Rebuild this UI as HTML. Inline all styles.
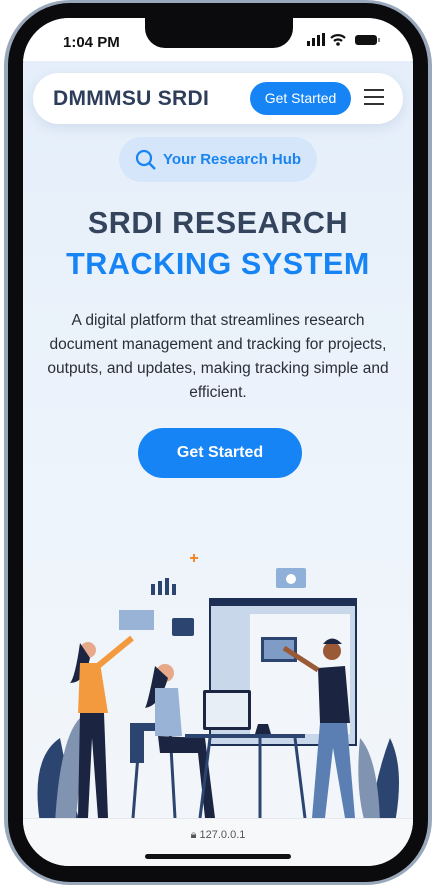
<!DOCTYPE html>
<html><head><meta charset="utf-8"><style>
*{margin:0;padding:0;box-sizing:border-box}
body{width:436px;height:885px;background:#fff;position:relative;overflow:hidden;font-family:"Liberation Sans",sans-serif}
.frame{position:absolute;left:4px;top:0;width:428px;height:885px;border-radius:66px;background:#9aa8bb;}
.bez{position:absolute;left:8px;top:3px;width:420px;height:879px;border-radius:62px;background:#0b0b0d}
.screen{position:absolute;left:23px;top:18px;width:390px;height:848px;border-radius:46px;overflow:hidden;background:linear-gradient(#e4eefa,#eef4fb 60%,#f3f6fa)}
.status{position:absolute;left:0;top:0;width:390px;height:43px;background:#fff}
.notch{position:absolute;left:122px;top:0;width:148px;height:30px;background:#0b0b0d;border-radius:0 0 20px 20px}
.time{position:absolute;left:40px;top:16px;font-weight:bold;font-size:15px;color:#111}
.nav{position:absolute;left:10px;top:55px;width:370px;height:51px;background:#fff;border-radius:26px;box-shadow:0 4px 12px rgba(60,90,140,.12)}
.logo{position:absolute;left:20px;top:14px;font-size:21px;font-weight:bold;color:#2e3e5a;letter-spacing:.3px}
.gs{position:absolute;left:217px;top:9px;width:101px;height:33px;border-radius:17px;background:#1784f5;color:#fff;font-size:14px;text-align:center;line-height:33px}
.hub{position:absolute;left:96px;top:119px;width:198px;height:45px;border-radius:23px;background:#d5e6fa;color:#1a84f0;font-size:15px;font-weight:bold;line-height:45px;padding-left:44px}
h1{position:absolute;left:0;width:390px;text-align:center;font-size:30.5px;font-weight:bold;letter-spacing:.6px}
p{position:absolute;left:20px;top:291px;width:350px;text-align:center;font-size:15.5px;line-height:24px;color:#2a2f38}
.btn{position:absolute;left:115px;top:410px;width:164px;height:50px;border-radius:25px;background:#1784f5;color:#fff;font-size:16px;font-weight:bold;text-align:center;line-height:50px}
.bottom{position:absolute;left:0;top:800px;width:390px;height:48px;background:#f7f8fa;border-top:1px solid #e6e8ec}
.url{position:absolute;left:0;width:390px;top:10px;text-align:center;font-size:11px;color:#555}
.home{position:absolute;left:122px;top:35px;width:146px;height:5px;border-radius:3px;background:#111}
</style></head><body>
<div class="frame"></div><div class="bez"></div>
<div class="screen">
 <div class="status"><div class="notch"></div><div class="time">1:04 PM</div>
  <svg style="position:absolute;left:284px;top:15px" width="80" height="14"><rect x="0" y="8" width="3" height="5" fill="#111"/><rect x="5" y="5" width="3" height="8" fill="#111"/><rect x="10" y="2" width="3" height="11" fill="#111"/><rect x="15" y="0" width="3" height="13" fill="#111"/>
  <path d="M24 5 A10 10 0 0 1 38 5 M27 8 A6 6 0 0 1 35 8" stroke="#111" stroke-width="2.2" fill="none"/><circle cx="31" cy="11" r="1.8" fill="#111"/>
  <rect x="48" y="2" width="22" height="10" rx="3" fill="#111"/><rect x="71" y="5" width="2" height="4" fill="#888"/></svg></div>
 <div class="nav"><div class="logo">DMMMSU SRDI</div><div class="gs">Get Started</div>
  <svg style="position:absolute;left:331px;top:15px" width="20" height="18"><path d="M0 2H20M0 9H20M0 16H20" stroke="#333" stroke-width="2"/></svg></div>
 <div class="hub"><svg style="position:absolute;left:16px;top:12px" width="22" height="22"><circle cx="9" cy="9" r="7" stroke="#1a84f0" stroke-width="2.2" fill="none"/><path d="M14 14L20 20" stroke="#1a84f0" stroke-width="2.5"/></svg>Your Research Hub</div>
 <h1 style="top:188px;color:#34445c">SRDI RESEARCH</h1>
 <h1 style="top:229px;color:#1784f5">TRACKING SYSTEM</h1>
 <p>A digital platform that streamlines research document management and tracking for projects, outputs, and updates, making tracking simple and efficient.</p>
 <div class="btn">Get Started</div>
 <svg style="position:absolute;left:0;top:520px" width="390" height="280" viewBox="23 520 390 280">
  <rect x="209" y="580" width="148" height="148" fill="#1e2f55"/><rect x="211" y="588" width="144" height="138" fill="#c9d7ea"/><rect x="250" y="596" width="100" height="120" fill="#f2f5fa"/>
  <rect x="261" y="619" width="36" height="25" fill="#2c4470"/><rect x="264" y="622" width="30" height="19" fill="#7e9cc6"/>
  <path d="M153 577V566M160 577V563M167 577V560M174 577V566" stroke="#2c4470" stroke-width="4"/>
  <rect x="119" y="592" width="35" height="20" fill="#98b3d6"/><rect x="172" y="600" width="22" height="18" rx="2" fill="#2c4470"/>
  <rect x="276" y="550" width="30" height="20" rx="2" fill="#8fb0d8"/><circle cx="291" cy="561" r="5" fill="#fff"/>
  <path d="M190 540 h8 M194 536 v8" stroke="#f28a2a" stroke-width="2"/>
  <line x1="70" y1="805" x2="400" y2="805" stroke="#cdd6e3"/>
  <path d="M40 805 Q30 740 60 720 Q70 770 80 805Z" fill="#2c4470"/><path d="M55 805 Q60 720 80 700 Q82 760 75 805Z" fill="#8093b0"/>
  <path d="M395 805 Q405 750 390 720 Q375 760 370 805Z" fill="#2c4470"/><path d="M380 805 Q378 740 360 720 Q355 770 365 805Z" fill="#8093b0"/>
  <circle cx="88" cy="632" r="8" fill="#e7a98a"/><path d="M80 625 Q75 660 70 665 Q85 665 90 640Z" fill="#1b2440"/>
  <path d="M80 645 L100 645 L108 695 L78 695Z" fill="#f39a3f"/><path d="M98 648 L132 620" stroke="#f39a3f" stroke-width="6"/>
  <path d="M80 695 L104 695 L108 800 L98 800 L92 720 L88 800 L78 800Z" fill="#1b2440"/>
  <rect x="140" y="705" width="35" height="8" fill="#2c4470"/><rect x="130" y="705" width="14" height="40" fill="#2c4470"/><path d="M140 712L133 800M170 712L175 800" stroke="#2c4470" stroke-width="3"/>
  <circle cx="165" cy="655" r="9" fill="#e7a98a"/><path d="M155 648 Q148 685 145 690 Q160 688 168 660Z" fill="#1b2440"/>
  <path d="M155 670 L178 670 L182 718 L155 718Z" fill="#98b3d6"/><path d="M158 718 L205 720 L215 800 L205 800 L198 735 L160 735Z" fill="#1b2440"/>
  <rect x="203" y="672" width="48" height="40" rx="2" fill="#1b2440"/><rect x="206" y="675" width="42" height="34" fill="#e8eef6"/>
  <rect x="185" y="716" width="120" height="4" fill="#2c4470"/><path d="M260 720V800M210 720L200 800M295 720L305 800" stroke="#2c4470" stroke-width="3"/>
  <path d="M255 716h16l-3-10h-10Z" fill="#1b2440"/>
  <circle cx="332" cy="633" r="9" fill="#9a5a35"/><path d="M323 626 Q332 615 342 626Z" fill="#1b2440"/>
  <path d="M318 650 L345 648 L350 705 L320 705Z" fill="#1b2440"/><path d="M318 652 L284 630" stroke="#9a5a35" stroke-width="5"/>
  <path d="M320 705 L347 705 L355 800 L345 800 L333 730 L325 800 L312 800Z" fill="#5c7fb3"/>
 </svg>
 <div class="bottom"><div class="url">🔒︎ 127.0.0.1</div><div class="home"></div></div>
</div>
</body></html>
